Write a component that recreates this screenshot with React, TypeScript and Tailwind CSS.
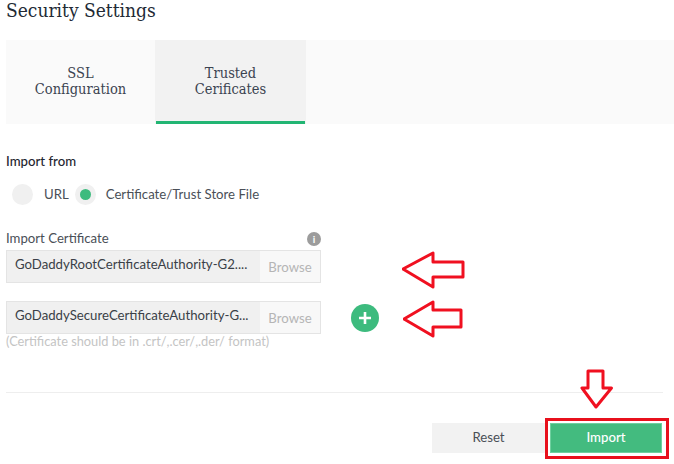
const Tab = ({ lines, active }: { lines: string[]; active?: boolean }) => (
  <div className={`flex h-[84px] flex-col ${active ? "w-[151px] bg-[#f2f2f2]" : "w-[149px]"}`}>
    <div className="flex flex-1 flex-col items-center justify-center text-[14.5px] leading-[16px] [font-stretch:condensed] text-[#3b4350]">
      {lines.map((l) => (
        <span key={l}>{l}</span>
      ))}
    </div>
    <div className={`mx-[1px] h-[3px] ${active ? "bg-[#22b573]" : ""}`} />
  </div>
);

const FileField = ({ name }: { name: string }) => (
  <div className="flex h-[33px] w-[315px] border border-[#e4e4e4] bg-[#f0f0f0]">
    <div className="flex-1 pb-[5px] pl-[8px] text-[13.2px] leading-[26px] whitespace-nowrap text-[#3a3f47]">{name}</div>
    <div className="w-[60px] bg-[#f8f8f8] pt-[1px] text-center text-[13.2px] leading-[31px] text-[#b5b5b5]">Browse</div>
  </div>
);

const Arrow = ({ className, d }: { className: string; d: string }) => (
  <svg className={className} viewBox="0 0 64 38" fill="none">
    <path d={d} stroke="#f01020" strokeWidth="3" fill="#fff" strokeLinejoin="round" />
  </svg>
);

export default function App() {
  return (
    <div className="relative h-[464px] w-[674px] overflow-hidden bg-white font-['Lato',sans-serif]">
      <h1 className="h-[20px] pl-[6px] font-['DejaVu_Serif',serif] text-[19px] leading-[20px] [font-stretch:condensed] text-[#222a35]">Security Settings</h1>
      <div className="mt-[20px] ml-[6px] flex h-[84px] bg-[#fafafa] font-['DejaVu_Serif',serif]">
        <Tab lines={["SSL", "Configuration"]} />
        <Tab lines={["Trusted", "Cerificates"]} active />
      </div>

      <div className="mt-[29px] pl-[6px] text-[13.2px] leading-[17px] font-medium text-[#1f2630]">Import from</div>
      <div className="mt-[14px] flex items-center pl-[12px] text-[13.2px] text-[#4a4f57]">
        <span className="h-[21px] w-[21px] rounded-full bg-[#f0f0f0]" />
        <span className="ml-[11px]">URL</span>
        <span className="ml-[6px] flex h-[21px] w-[21px] items-center justify-center rounded-full bg-[#f0f0f0]">
          <span className="h-[11px] w-[11px] rounded-full bg-[#3dbb7e]" />
        </span>
        <span className="ml-[10px]">Certificate/Trust Store File</span>
      </div>

      <div className="mt-[25px] flex w-[321px] items-center justify-between pl-[6px] text-[13.2px] leading-[17px] text-[#4a4f57]">
        <span>Import Certificate</span>
        <span className="flex h-[14px] w-[14px] items-center justify-center rounded-full bg-[#9c9c9c] text-[10px] leading-none font-bold text-white">i</span>
      </div>

      <div className="mt-[3px] flex flex-col gap-[18px] pl-[6px]">
        <FileField name="GoDaddyRootCertificateAuthority-G2...." />
        <div className="flex items-center">
          <FileField name="GoDaddySecureCertificateAuthority-G..." />
          <span className="ml-[30px] flex h-[28px] w-[28px] items-center justify-center rounded-full bg-[#3dbb7e]">
            <svg width="14" height="14" viewBox="0 0 14 14">
              <path d="M7 1v12M1 7h12" stroke="#fff" strokeWidth="2.6" />
            </svg>
          </span>
        </div>
      </div>
      <div className="pl-[6px] text-[12.8px] leading-[15px] text-[#c4c4c4]">(Certificate should be in .crt/,.cer/,.der/ format)</div>

      <div className="mt-[43px] ml-[6px] h-px w-[657px] bg-[#eeeeee]" />

      <div className="mt-[30px] flex pl-[432px] text-[13.2px]">
        <button className="h-[30px] w-[113px] bg-[#f2f2f2] text-[#4a4f57]">Reset</button>
        <button className="ml-[5px] h-[30px] w-[112px] border border-[#6fd09f] bg-[#43bb7f] font-medium text-white">Import</button>
      </div>

      {/* annotations on top of the screenshot */}
      <div className="absolute top-[418px] left-[545px] h-[41px] w-[124px] border-[3px] border-[#e8101c]" />
      <Arrow className="absolute top-[251px] left-[402px] h-[38px] w-[64px]" d="M1 18 L31 2 V11 H61 V26 H31 V36 Z" />
      <Arrow className="absolute top-[300px] left-[403px] h-[38px] w-[64px]" d="M1 19 L30 2 V10 H58 V27 H30 V36 Z" />
      <svg className="absolute top-[369px] left-[580px] h-[41px] w-[33px]" viewBox="0 0 33 41" fill="none">
        <path d="M8 2 H23 V19 H31.5 L16 38 L2 19 H8 Z" stroke="#f01020" strokeWidth="3" fill="#fff" strokeLinejoin="round" />
      </svg>
    </div>
  );
}
